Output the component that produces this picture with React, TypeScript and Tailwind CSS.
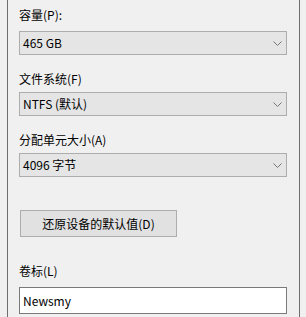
import React from 'react';

const FONT = { fontFamily: '"Noto Sans CJK SC", "Noto Sans", sans-serif' };

const Chevron: React.FC = () => (
    <svg width="9" height="5" viewBox="0 0 9 5" className="shrink-0 mr-[1px]">
        <path d="M0.5 0.5 L4.5 4.5 L8.5 0.5" fill="none" stroke="#767676" strokeWidth="1" />
    </svg>
);

const Combo: React.FC<{ value: string; className?: string }> = ({ value, className }) => (
    <div className={`flex items-center justify-between w-[268px] h-[24px] border border-[#adadad] bg-[#e5e5e5] pl-[3px] pr-[3px] text-[12px] text-black ${className ?? ''}`}>
        <span className="leading-4">{value}</span>
        <Chevron />
    </div>
);

const Label: React.FC<{ text: string; className?: string }> = ({ text, className }) => (
    <div className={`h-4 leading-4 text-[12px] text-black ${className ?? ''}`}>{text}</div>
);

const App: React.FC = () => {
    return (
        <div className="flex w-[306px] h-[317px] bg-[#f0f0f0] overflow-hidden" style={FONT}>
            <div className="w-[7px] shrink-0" />
            <div className="w-[1px] h-[317px] shrink-0 bg-[#6e6e6e]" />
            <div className="w-[291px] shrink-0 pl-[11px] pt-[7px]">
                <Label text="容量(P):" />
                <Combo value="465 GB" className="mt-[8px]" />

                <Label text="文件系统(F)" className="mt-[16px]" />
                <Combo value="NTFS (默认)" className="mt-[5px]" />

                <Label text="分配单元大小(A)" className="mt-[16px]" />
                <Combo value="4096 字节" className="mt-[5px]" />

                <button className="mt-[33px] ml-[1px] w-[157px] h-[27px] border border-[#adadad] bg-[#e1e1e1] text-[12px] text-black flex items-center justify-center">
                    还原设备的默认值(D)
                </button>

                <Label text="卷标(L)" className="mt-[26px]" />
                <div className="mt-[8px] w-[268px] h-[27px] border border-[#7a7a7a] bg-white pl-[3px] flex items-center text-[12px] text-black">
                    Newsmy
                </div>
            </div>
            <div className="w-[1px] h-[317px] shrink-0 bg-[#6e6e6e]" />
        </div>
    );
};

export default App;
